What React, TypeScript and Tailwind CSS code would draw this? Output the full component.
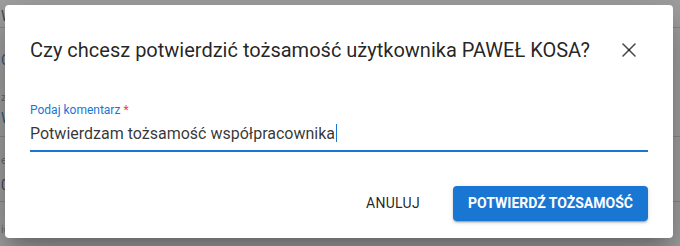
import { X } from "lucide-react";

function Backdrop() {
  return (
    <div className="flex flex-col text-[14px] text-[#3b4a5a]">
      <div className="h-[28px] border-b border-[#8a8a8a] pl-[1px] pt-[8px] leading-[16px]">W</div>
      <div className="h-[109px] border-b border-[#8a8a8a] pl-[1px] pt-[24px] leading-[16px]">
        <div className="text-[#2d5b8a]">C</div>
        <div className="mt-[22px] text-[11px] text-[#6a6a6a]">zv</div>
        <div className="mt-[4px] text-[#2d5b8a]">W</div>
      </div>
      <div className="h-[65px] border-b border-[#8a8a8a] pl-[1px] pt-[16px] leading-[16px]">
        <div className="text-[11px] text-[#6a6a6a]">e</div>
        <div className="mt-[8px]">0</div>
      </div>
      <div className="pl-[1px] pt-[20px] text-[11px] leading-[16px] text-[#6a6a6a]">ic</div>
    </div>
  );
}

export default function App() {
  return (
    <div className="relative h-[246px] w-[680px] overflow-hidden bg-[#a1a1a1] font-['Roboto',sans-serif]">
      <Backdrop />
      <div className="absolute left-[5px] top-[5px] flex h-[233px] w-[668px] flex-col rounded-[4px] bg-white shadow-[0_11px_15px_-7px_rgba(0,0,0,0.2),0_24px_38px_3px_rgba(0,0,0,0.14),0_9px_46px_8px_rgba(0,0,0,0.12)]">
        <div className="flex items-center justify-between pl-[25px] pr-[24px] pt-[25px]">
          <h2 className="text-[20px] leading-[32px] font-normal text-[rgba(0,0,0,0.87)]">
            Czy chcesz potwierdzić tożsamość użytkownika PAWEŁ KOSA?
          </h2>
          <button type="button" className="flex size-[40px] items-center justify-center text-[rgba(0,0,0,0.7)]">
            <X className="size-[24px]" strokeWidth={1.6} />
          </button>
        </div>

        <div className="ml-[25px] mr-[25px] mt-[32px] flex flex-col">
          <label className="text-[12px] leading-[16px] text-[#1976d2]">
            Podaj komentarz <span className="text-[#f44336]">*</span>
          </label>
          <div className="mt-[3px] border-b-2 border-[#1976d2] pb-[5px] text-[16px] leading-[23px] text-[rgba(0,0,0,0.8)]">
            Potwierdzam tożsamość współpracownika
            <span className="ml-[1px] inline-block h-[18px] w-[1px] translate-y-[3px] bg-[#1976d2]" />
          </div>
        </div>

        <div className="mt-auto mb-[17px] flex items-center justify-end gap-[25px] pr-[25px]">
          <button type="button" className="h-[35px] px-[8px] text-[14px] font-normal tracking-[0.3px] text-[rgba(0,0,0,0.87)]">
            ANULUJ
          </button>
          <button
            type="button"
            className="h-[35px] w-[195px] rounded-[4px] bg-[#1976d2] text-[14px] font-bold text-white shadow-[0_3px_1px_-2px_rgba(0,0,0,0.2),0_2px_2px_0_rgba(0,0,0,0.14),0_1px_5px_0_rgba(0,0,0,0.12)]"
          >
            POTWIERDŹ TOŻSAMOŚĆ
          </button>
        </div>
      </div>
    </div>
  );
}
